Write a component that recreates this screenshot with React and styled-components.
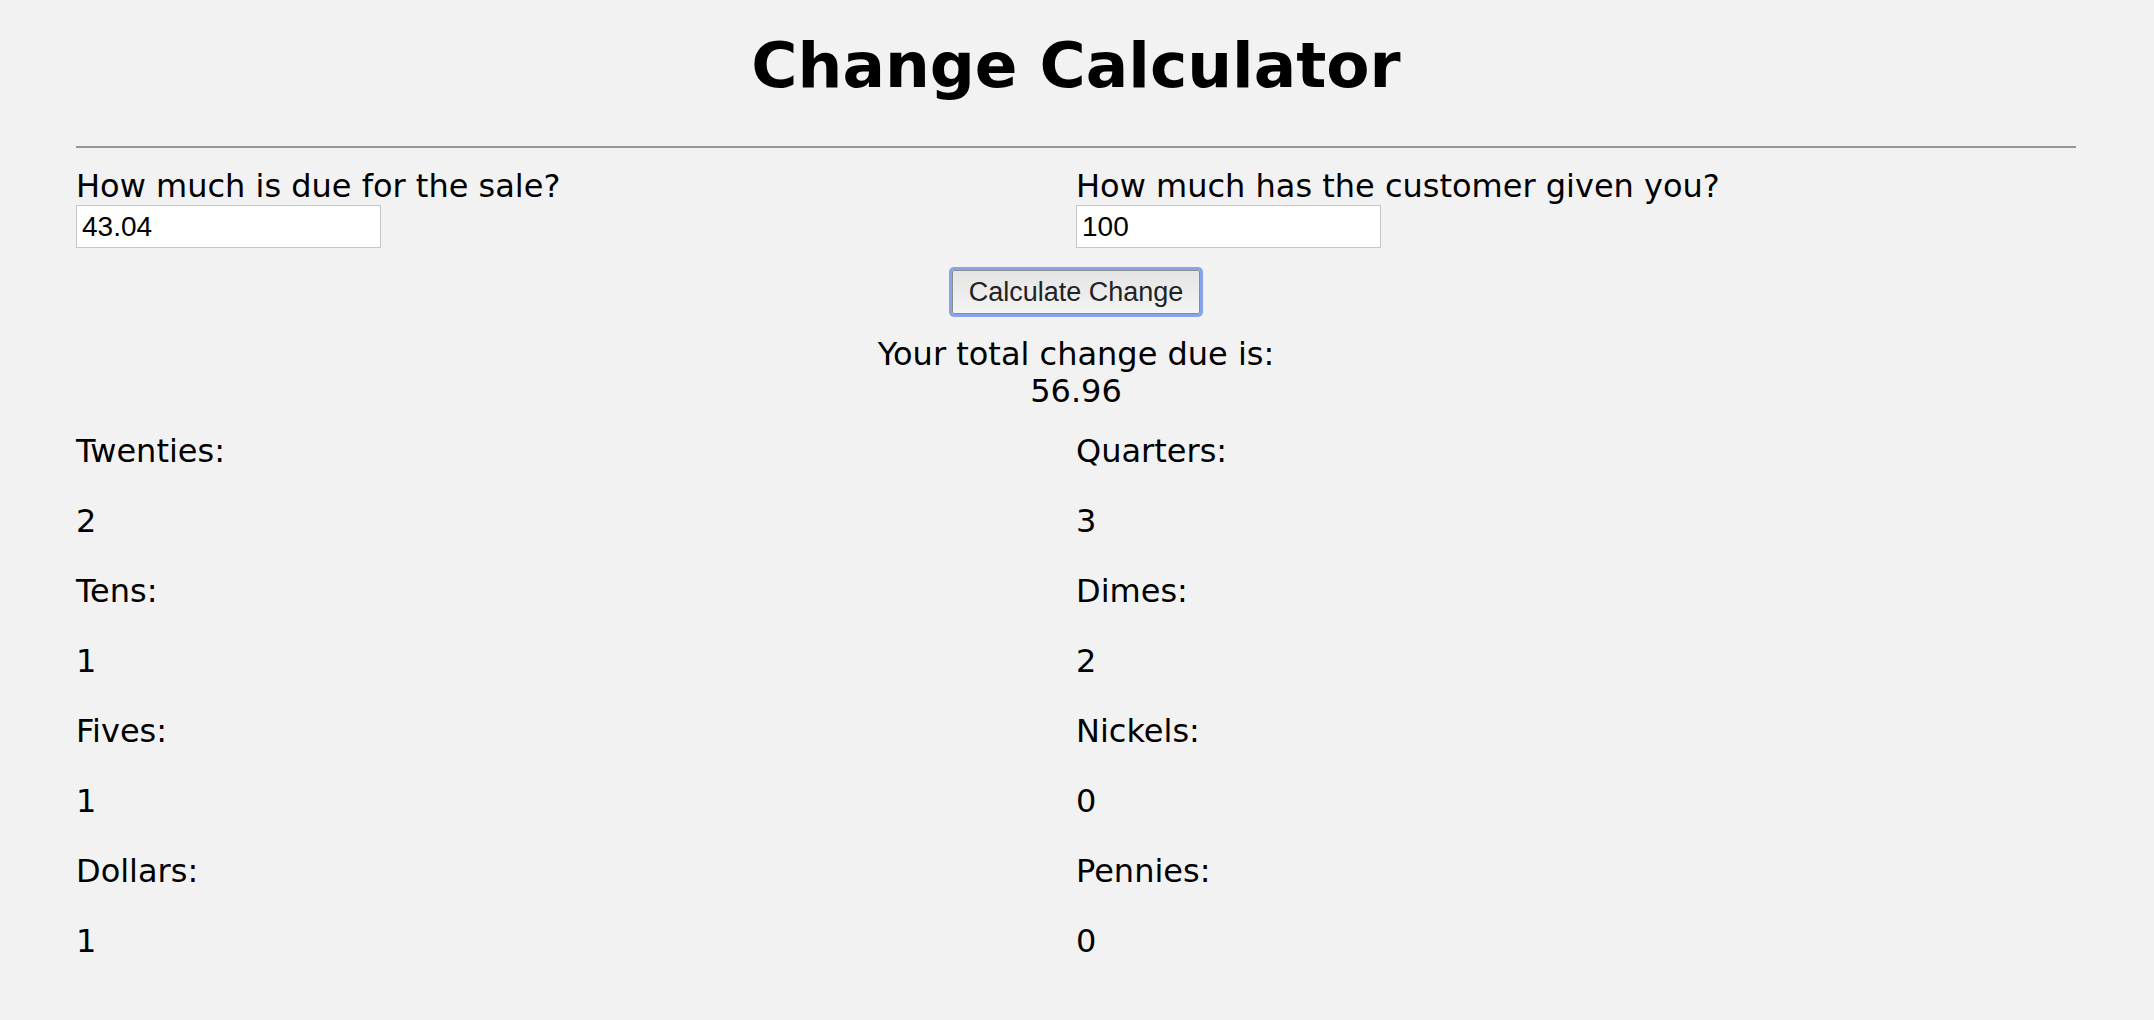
import React from 'react';
import styled, { createGlobalStyle } from 'styled-components';

const GlobalStyle = createGlobalStyle`
  html, body {
    margin: 0;
    padding: 0;
    background-color: #f2f2f2;
  }
  body {
    font-family: "DejaVu Sans", Verdana, sans-serif;
    font-size: 32px;
    color: #000;
  }
`;

const Page = styled.main`
  padding: 29px 78px 40px 76px;
`;

const Title = styled.h1`
  margin: 0 0 43px;
  font-size: 63px;
  line-height: 74px;
  font-weight: bold;
  text-align: center;
`;

const Rule = styled.hr`
  margin: 0 0 20px;
  border: 0;
  border-top: 2px solid #979797;
  height: 0;
`;

const InputRow = styled.div`
  display: grid;
  grid-template-columns: 1fr 1fr;
`;

const Field = styled.div`
  display: flex;
  flex-direction: column;
  align-items: flex-start;
`;

const Label = styled.label`
  line-height: 37px;
`;

const TextInput = styled.input`
  box-sizing: border-box;
  width: 305px;
  height: 43px;
  margin: 0;
  padding: 0 5px;
  border: 1px solid #c6c6c6;
  background: #fff;
  font-family: "Liberation Sans", Arial, sans-serif;
  font-size: 28px;
  color: #000;
  outline: none;
`;

const ButtonRow = styled.div`
  display: flex;
  justify-content: center;
  padding: 22px 0;
`;

const CalcButton = styled.button`
  box-sizing: border-box;
  width: 248px;
  height: 44px;
  padding: 0;
  border: 1px solid #8c8c8c;
  border-radius: 2px;
  background: linear-gradient(#e4e4e4, #f4f4f4);
  box-shadow: 0 0 0 3px #87a3ea;
  font-family: "Liberation Sans", Arial, sans-serif;
  font-size: 27px;
  color: #222;
  cursor: pointer;
`;

const Total = styled.div`
  text-align: center;
  line-height: 37px;
  margin-bottom: 23px;
`;

const Results = styled.div`
  display: grid;
  grid-template-columns: 1fr 1fr;
  row-gap: 33px;
`;

const Cell = styled.div`
  line-height: 37px;
`;

const left = [
  ['Twenties:', 2],
  ['Tens:', 1],
  ['Fives:', 1],
  ['Dollars:', 1],
];

const right = [
  ['Quarters:', 3],
  ['Dimes:', 2],
  ['Nickels:', 0],
  ['Pennies:', 0],
];

export default function App() {
  const rows = [];
  left.forEach((item, i) => {
    rows.push([item[0], right[i][0]]);
    rows.push([item[1], right[i][1]]);
  });

  return (
    <>
      <GlobalStyle />
      <Page>
        <Title>Change Calculator</Title>
        <Rule />
        <InputRow>
          <Field>
            <Label htmlFor="due">How much is due for the sale?</Label>
            <TextInput id="due" type="text" defaultValue="43.04" />
          </Field>
          <Field>
            <Label htmlFor="given">How much has the customer given you?</Label>
            <TextInput id="given" type="text" defaultValue="100" />
          </Field>
        </InputRow>
        <ButtonRow>
          <CalcButton type="button">Calculate Change</CalcButton>
        </ButtonRow>
        <Total>
          <div>Your total change due is:</div>
          <div>56.96</div>
        </Total>
        <Results>
          {rows.map((pair, i) => (
            <React.Fragment key={i}>
              <Cell>{pair[0]}</Cell>
              <Cell>{pair[1]}</Cell>
            </React.Fragment>
          ))}
        </Results>
      </Page>
    </>
  );
}
